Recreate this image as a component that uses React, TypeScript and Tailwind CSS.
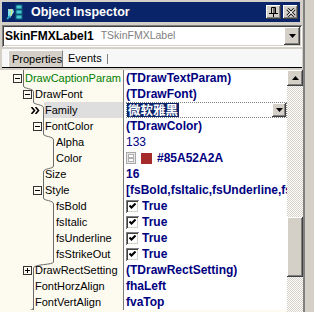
import React from 'react';

type Row = {
  name: string;
  depth: number;
  expand?: 'minus' | 'plus';
  green?: boolean;
  selected?: boolean;
  value: React.ReactNode;
};

// x of the tree line for each nesting level
const LINE_X = [23, 33, 43, 53];

const raised = 'shadow-[inset_-1px_-1px_0_#404040,inset_1px_1px_0_#ffffff,inset_-2px_-2px_0_#808080]';
const sunken = 'shadow-[inset_1px_1px_0_#808080,inset_-1px_-1px_0_#ffffff,inset_2px_2px_0_#404040,inset_-2px_-2px_0_#d4d0c8]';

const Bold = ({ children }: { children: React.ReactNode }) => (
  <span className="font-bold text-[#000080] whitespace-nowrap">{children}</span>
);

const Check = () => (
  <span className={`w-[13px] h-[13px] shrink-0 bg-white flex items-center justify-center ${sunken}`}>
    <svg width="7" height="7" viewBox="0 0 7 7">
      <polyline points="0.5,2.5 2.5,4.5 6.5,0.5" fill="none" stroke="#000" strokeWidth="2" />
    </svg>
  </span>
);

const CheckValue = () => (
  <span className="flex items-center gap-[3px]">
    <Check />
    <Bold>True</Bold>
  </span>
);

const ColorValue = () => (
  <span className="flex items-center">
    <svg width="10" height="12" viewBox="0 0 10 12" className="shrink-0">
      <rect x="0.5" y="0.5" width="9" height="11" fill="#e8e8e8" stroke="#a8a8a8" />
      <rect x="2.5" y="2.5" width="5" height="3" fill="#fff" stroke="#b0b0b0" />
      <rect x="2.5" y="6.5" width="5" height="3" fill="#fff" stroke="#b0b0b0" />
    </svg>
    <span className="ml-[5px] w-[11px] h-[11px] bg-[#a52a2a] shrink-0" />
    <span className="ml-[5px]">
      <Bold>#85A52A2A</Bold>
    </span>
  </span>
);

const FamilyEditor = () => (
  <div className="flex h-4 w-full border border-dotted border-[#808080] bg-white">
    <div className="flex-1 flex items-center overflow-visible">
      <span
        className="bg-[#0a246a] text-white font-bold text-[12.5px] leading-[14px] px-[1px]"
        style={{ fontFamily: '"Noto Sans CJK SC", sans-serif' }}
      >
        微软雅黑
      </span>
    </div>
    <div className={`w-[14px] bg-[#d4d0c8] flex items-center justify-center ${raised}`}>
      <svg width="7" height="4" viewBox="0 0 7 4">
        <path d="M0 0 H7 L3.5 4 Z" fill="#000" />
      </svg>
    </div>
  </div>
);

const rows: Row[] = [
  { name: 'DrawCaptionParam', depth: 0, expand: 'minus', green: true, value: <Bold>(TDrawTextParam)</Bold> },
  { name: 'DrawFont', depth: 1, expand: 'minus', value: <Bold>(TDrawFont)</Bold> },
  { name: 'Family', depth: 2, selected: true, value: <FamilyEditor /> },
  { name: 'FontColor', depth: 2, expand: 'minus', value: <Bold>(TDrawColor)</Bold> },
  { name: 'Alpha', depth: 3, value: <span className="text-[#000080]">133</span> },
  { name: 'Color', depth: 3, value: <ColorValue /> },
  { name: 'Size', depth: 2, value: <Bold>16</Bold> },
  { name: 'Style', depth: 2, expand: 'minus', value: <Bold>[fsBold,fsItalic,fsUnderline,fsStrikeOut]</Bold> },
  { name: 'fsBold', depth: 3, value: <CheckValue /> },
  { name: 'fsItalic', depth: 3, value: <CheckValue /> },
  { name: 'fsUnderline', depth: 3, value: <CheckValue /> },
  { name: 'fsStrikeOut', depth: 3, value: <CheckValue /> },
  { name: 'DrawRectSetting', depth: 1, expand: 'plus', value: <Bold>(TDrawRectSetting)</Bold> },
  { name: 'FontHorzAlign', depth: 1, value: <Bold>fhaLeft</Bold> },
  { name: 'FontVertAlign', depth: 1, value: <Bold>fvaTop</Bold> },
];

function ExpandBox({ kind }: { kind: 'minus' | 'plus' }) {
  return (
    <svg width="9" height="9" viewBox="0 0 9 9">
      <rect x="0.5" y="0.5" width="8" height="8" fill="none" stroke="#333" />
      <path d="M2 4.5 H7" stroke="#000" />
      {kind === 'plus' && <path d="M4.5 2 V7" stroke="#000" />}
    </svg>
  );
}

function GridRow({ row, prevDepth, last }: { row: Row; prevDepth: number; last: boolean }) {
  const x = LINE_X[row.depth] + 0.5;
  const px = LINE_X[prevDepth] + 0.5;
  let d = px === x ? `M${x} 0 V16` : `M${px} 0 C${px} 3 ${x} 2 ${x} 6 V16`;
  if (last) d += ` M${x} 14 C${x} 16 ${x - 3} 15 ${x - 5} 18`;
  const textLeft = LINE_X[row.depth] + (row.depth === 3 ? 3 : 2);
  return (
    <div className="flex h-4 shrink-0">
      <div className="relative w-[123px] shrink-0 bg-[#fdfaef] overflow-hidden text-[11px]">
        {row.selected && <div className="absolute inset-y-0 left-[44px] right-0 bg-[#dedede]" />}
        <svg className="absolute left-0 top-0" width="123" height="16">
          <path d={d} fill="none" stroke="#6a6a6a" />
        </svg>
        {row.expand && (
          <div className="absolute top-[4px]" style={{ left: LINE_X[row.depth] - 10 }}>
            <ExpandBox kind={row.expand} />
          </div>
        )}
        {row.selected && (
          <svg className="absolute left-[31px] top-[5px]" width="9" height="7" viewBox="0 0 9 7">
            <path d="M0.5 0 L3.5 3.5 L0.5 7 M4.5 0 L7.5 3.5 L4.5 7" fill="none" stroke="#000" strokeWidth="1.6" />
          </svg>
        )}
        <div
          className={`relative leading-4 whitespace-nowrap ${row.green ? 'text-[#008000]' : 'text-black'}`}
          style={{ paddingLeft: textLeft }}
        >
          {row.name}
        </div>
      </div>
      <div className="w-px bg-[#7a7a7a] shrink-0" />
      <div className="flex-1 min-w-0 bg-white flex items-center pl-[2px] overflow-hidden leading-4">
        {row.value}
      </div>
    </div>
  );
}

export default function App() {
  return (
    <div
      className="w-[314px] h-[312px] bg-[#d4d0c8] overflow-hidden flex text-[12px] text-black"
      style={{ fontFamily: '"Liberation Sans", Arial, sans-serif' }}
    >
      <div className="w-[303px] shrink-0 flex flex-col">
        {/* title bar */}
        <div className="ml-[2px] mt-[2px] w-[298px] h-[20px] bg-[#0a246a] flex items-center shrink-0">
          <svg className="ml-[4px]" width="17" height="16" viewBox="0 0 17 16">
            <rect x="10" y="1" width="6" height="4" fill="#48c8d0" stroke="#0b5e7a" />
            <rect x="10" y="6" width="6" height="4" fill="#48c8d0" stroke="#0b5e7a" />
            <rect x="10" y="11" width="6" height="4" fill="#48c8d0" stroke="#0b5e7a" />
            <path d="M2 5 L7 5 L8 8 L4 14 L2 13 Z" fill="#7fe0ec" />
            <path d="M3 6 L6 6 L5 12" fill="none" stroke="#e8e070" />
            <path d="M1 15 L4 12" stroke="#2aa0c0" strokeWidth="2" />
          </svg>
          <span className="ml-[8px] text-white font-bold text-[12.5px] whitespace-nowrap">Object Inspector</span>
          <div className="ml-auto mr-[2px] flex gap-[2px]">
            <div className={`w-[15px] h-[14px] bg-[#d4d0c8] flex items-center justify-center ${raised}`}>
              <svg width="9" height="10" viewBox="0 0 9 10">
                <path d="M2.5 0.5 H6.5 V6.5 H2.5 Z" fill="none" stroke="#000" />
                <path d="M5 1 V6" stroke="#000" />
                <path d="M0 6.5 H9" stroke="#000" />
                <path d="M4.5 7 V10" stroke="#000" />
              </svg>
            </div>
            <div className={`w-[15px] h-[14px] bg-[#d4d0c8] flex items-center justify-center ${raised}`}>
              <svg width="10" height="9" viewBox="0 0 10 9">
                <path d="M1.5 1 L8.5 8 M8.5 1 L1.5 8" stroke="#000" strokeWidth="3" />
                <path d="M1.5 1 L8.5 8 M8.5 1 L1.5 8" stroke="#f4f4f4" strokeWidth="1.2" />
              </svg>
            </div>
          </div>
        </div>

        {/* component selector */}
        <div className={`ml-[2px] mt-[3px] w-[300px] h-[22px] bg-white flex items-center shrink-0 ${sunken}`}>
          <span className="ml-[3px] font-bold whitespace-nowrap">SkinFMXLabel1</span>
          <span className="ml-[7px] text-[#808080] text-[10.5px] whitespace-nowrap">TSkinFMXLabel</span>
          <div className={`ml-auto mr-[2px] w-[16px] h-[18px] bg-[#d4d0c8] flex items-center justify-center ${raised}`}>
            <svg width="7" height="4" viewBox="0 0 7 4">
              <path d="M0 0 H7 L3.5 4 Z" fill="#000" />
            </svg>
          </div>
        </div>

        {/* tabs */}
        <div className="mt-[2px] ml-[2px] w-[300px] h-[19px] bg-[#f7f7f7] flex items-end shrink-0 border-b border-black text-[11px]">
          <div className="ml-[6px] h-[17px] w-[55px] bg-[#d4d0c8] border-l border-t border-white border-r border-r-[#808080] flex items-center pl-[3px]">
            Properties
          </div>
          <div className="h-[17px] flex items-center pl-[5px] pr-[5px]">Events</div>
          <div className="mb-[3px] h-[10px] w-px bg-[#808080]" />
        </div>

        {/* property grid */}
        <div className="mt-[2px] flex flex-1 min-h-0">
          <div className="flex-1 min-w-0 flex flex-col bg-[#fdfaef]">
            {rows.map((row, i) => (
              <GridRow
                key={row.name}
                row={row}
                prevDepth={i === 0 ? 0 : rows[i - 1].depth}
                last={i === rows.length - 1}
              />
            ))}
          </div>
          <div className="w-[16px] shrink-0 flex flex-col bg-[image:repeating-conic-gradient(#d4d0c8_0_25%,#ffffff_0_50%)] bg-[length:2px_2px]">
            <div className={`h-4 shrink-0 bg-[#d4d0c8] flex items-center justify-center ${raised}`}>
              <svg width="7" height="4" viewBox="0 0 7 4">
                <path d="M0 4 H7 L3.5 0 Z" fill="#000" />
              </svg>
            </div>
            <div className="h-[131px] shrink-0" />
            <div className={`h-[60px] shrink-0 bg-[#d4d0c8] ${raised}`} />
          </div>
        </div>
      </div>
      <div className="flex-1 border-l-2 border-[#808080]" />
    </div>
  );
}
